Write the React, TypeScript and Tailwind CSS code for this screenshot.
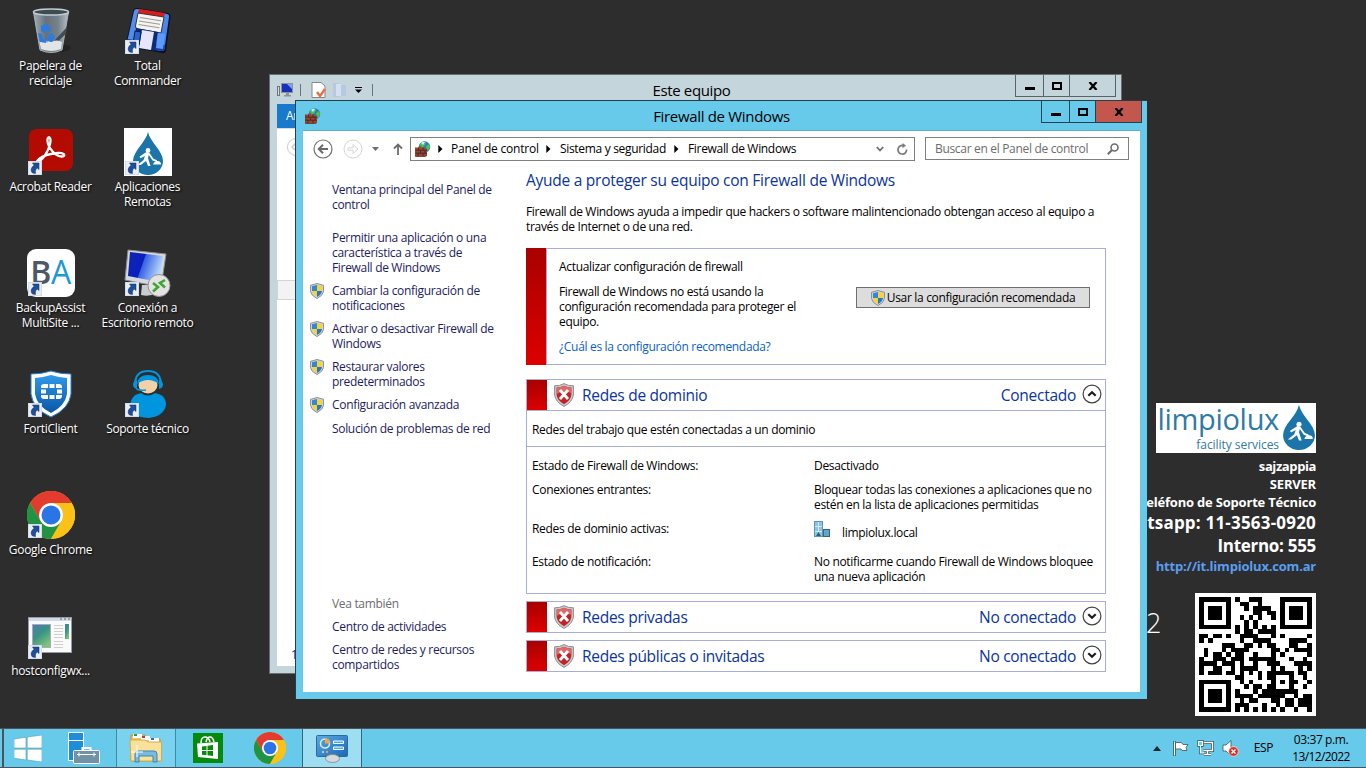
import React from "react";

/* ---------- QR code (version 2, level L, mask 6) ---------- */

const QR_SIZE = 25;

function gfMul(a: number, b: number) {
  let r = 0;
  for (let i = 7; i >= 0; i--) {
    r = (r << 1) ^ ((r >>> 7) * 0x11d);
    r ^= ((b >>> i) & 1) * a;
  }
  return r;
}

function errorWords(data: number[], degree: number) {
  const gen = new Array(degree).fill(0);
  gen[degree - 1] = 1;
  let root = 1;
  for (let i = 0; i < degree; i++) {
    for (let j = 0; j < degree; j++) {
      gen[j] = gfMul(gen[j], root);
      if (j + 1 < degree) gen[j] ^= gen[j + 1];
    }
    root = gfMul(root, 2);
  }
  const rem = new Array(degree).fill(0);
  for (const d of data) {
    const f = d ^ rem.shift();
    rem.push(0);
    gen.forEach((g, i) => (rem[i] ^= gfMul(g, f)));
  }
  return rem;
}

function qrMatrix(text: string) {
  const bits: number[] = [];
  const push = (v: number, n: number) => {
    for (let i = n - 1; i >= 0; i--) bits.push((v >> i) & 1);
  };
  push(4, 4);
  push(text.length, 8);
  for (const c of text) push(c.charCodeAt(0), 8);
  push(0, Math.min(4, 272 - bits.length));
  while (bits.length % 8) bits.push(0);
  for (let p = 0xec; bits.length < 272; p ^= 0xec ^ 0x11) push(p, 8);
  const words: number[] = [];
  for (let i = 0; i < 34; i++) words.push(parseInt(bits.slice(i * 8, i * 8 + 8).join(""), 2));
  const all = words.concat(errorWords(words, 10));

  const m = Array.from({ length: QR_SIZE }, () => new Array<number>(QR_SIZE).fill(0));
  const used = Array.from({ length: QR_SIZE }, () => new Array<boolean>(QR_SIZE).fill(false));
  const set = (r: number, c: number, v: boolean | number) => {
    if (r < 0 || c < 0 || r >= QR_SIZE || c >= QR_SIZE) return;
    m[r][c] = v ? 1 : 0;
    used[r][c] = true;
  };
  for (let i = 0; i < QR_SIZE; i++) {
    set(6, i, i % 2 === 0);
    set(i, 6, i % 2 === 0);
  }
  for (const [r, c] of [[3, 3], [3, 21], [21, 3]])
    for (let y = -4; y <= 4; y++)
      for (let x = -4; x <= 4; x++) {
        const d = Math.max(Math.abs(x), Math.abs(y));
        set(r + y, c + x, d !== 2 && d !== 4);
      }
  for (let y = -2; y <= 2; y++)
    for (let x = -2; x <= 2; x++) set(18 + y, 18 + x, Math.max(Math.abs(x), Math.abs(y)) !== 1);

  const fmt = "110110001000001".split("").map(Number);
  for (let i = 0; i < 15; i++) {
    if (i < 6) set(8, i, fmt[i]);
    else if (i === 6) set(8, 7, fmt[i]);
    else if (i === 7) set(8, 8, fmt[i]);
    else if (i === 8) set(7, 8, fmt[i]);
    else set(14 - i, 8, fmt[i]);
    if (i < 7) set(QR_SIZE - 1 - i, 8, fmt[i]);
    else set(8, QR_SIZE - 15 + i, fmt[i]);
  }
  set(17, 8, 1);

  let k = 0;
  for (let right = QR_SIZE - 1; right >= 1; right -= 2) {
    if (right === 6) right = 5;
    for (let v = 0; v < QR_SIZE; v++)
      for (let j = 0; j < 2; j++) {
        const x = right - j;
        const up = ((right + 1) & 2) === 0;
        const y = up ? QR_SIZE - 1 - v : v;
        if (used[y][x]) continue;
        let b = k < all.length * 8 ? (all[k >> 3] >> (7 - (k & 7))) & 1 : 0;
        k++;
        if ((((x * y) % 2) + ((x * y) % 3)) % 2 === 0) b ^= 1;
        m[y][x] = b;
      }
  }
  return m;
}

const QR_PATH = qrMatrix("http://it.limpiolux.com.ar/")
  .map((row, y) => row.map((v, x) => (v ? `M${x} ${y}h1v1h-1z` : "")).join(""))
  .join("");

/* ---------- icons ---------- */

function Shortcut() {
  return (
    <svg className="absolute bottom-px left-px h-[14px] w-[14px]" viewBox="0 0 14 14">
      <rect width="14" height="14" fill="#e9eef6" />
      <rect x=".5" y=".5" width="13" height="13" fill="none" stroke="#d5dde8" />
      <path d="M4.500 2H11v6.500L9.200 7C7.600 8.200 7.200 9.800 7.500 12.500L4.500 12C2.200 9.500 3 6.500 6.200 4.300Z" fill="#1d4f9c" stroke="#0d2f6a" strokeWidth=".5" />
    </svg>
  );
}

function RecycleBin() {
  return (
    <svg width="48" height="48" viewBox="0 0 48 48">
      <defs>
        <linearGradient id="bin" x1="0" x2="1">
          <stop offset="0" stopColor="#a3adb4" />
          <stop offset=".35" stopColor="#66727a" />
          <stop offset=".7" stopColor="#76828a" />
          <stop offset="1" stopColor="#b9c2c8" />
        </linearGradient>
      </defs>
      <ellipse cx="32" cy="41" rx="12" ry="4" fill="#232323" />
      <path d="M6.500 5H41.500L35 43Q24 48 13 43Z" fill="url(#bin)" stroke="#aab3b9" />
      <path d="M28 33 40 20l-1 7-10 9z" fill="#414d55" />
      <path d="M12.500 35Q18 32 24 35q6-3 11 0l-1 7q-10 4-20 0z" fill="#e2e5e6" />
      <ellipse cx="24" cy="5" rx="17.500" ry="3" fill="#3f4b53" stroke="#c3ccd2" strokeWidth="1.500" />
      <path d="m14 19 5-2 5 3-1 5-3-2-3 3-3-2zM11 26l4 1 1 5 4 1-1 3-6-1zM21 28l4-2 3 4-3 5-4-1-1 2z" fill="#2e7be0" />
    </svg>
  );
}

function Floppy() {
  return (
    <svg width="48" height="48" viewBox="0 0 48 48">
      <defs>
        <linearGradient id="fl" x1="0" x2="1" y2="1">
          <stop offset="0" stopColor="#5a93ee" />
          <stop offset="1" stopColor="#3f80ee" />
        </linearGradient>
      </defs>
      <path d="M13 1 44 6q3 1 2.500 4L42 44q-1 3-4 2L4 40q-3-1-2-4L9 4q1-3 4-3Z" fill="#0c1224" />
      <path d="M13 2 43 7q2.500.5 2 3L40.500 42q-.5 2.500-3 2L5 38.500q-2.500-.5-2-3L10 4q.5-2 3-2z" fill="url(#fl)" />
      <path d="m4 32 37 6-.5 4q-.5 2.500-3 2L5 38.500q-2.500-.5-2-3z" fill="#173fa6" />
      <path d="m15 2 26 4-1 4-26-4z" fill="#e01919" />
      <path d="m14 6 26 4-3 16-23-4q-3-.5-2.500-3z" fill="#f4f3ef" stroke="#333" />
      <path d="m16 10.500 21 3.300M15 14l21 3.300M14.500 17.500l21 3.300" stroke="#999" strokeWidth="1" />
      <path d="m12 21 22 4-3 19-22-4z" fill="#0d2a75" />
      <path d="m18 23 12 2-3 18-12-2z" fill="#e6e6fa" />
      <path d="m11 24 6 1-2 13-6-1z" fill="#2d66ca" stroke="#091b50" />
      <path d="m34 26 7 1-2 15-7-1z" fill="#5c9bfb" />
    </svg>
  );
}

function Acrobat() {
  return (
    <svg width="48" height="48" viewBox="0 0 48 48">
      <rect x="2" y="1" width="44" height="42" rx="7.500" fill="#b30b00" />
      <path
        d="M12 33C17 31 23 20 23.500 13 23.800 8 20 8 20.500 13 21 20 29 29 35 28.500 39.500 28 37 24.500 31 25 24 25.500 16 28 12 31 8 34.500 10 35.500 12 33Z"
        fill="none"
        stroke="#fff"
        strokeWidth="2.300"
      />
    </svg>
  );
}

function Drop() {
  return (
    <>
      <path d="M24 4C22 14 9 23 9 33a15 14 0 0 0 30 0C39 23 26 14 24 4Z" fill="#1b75a8" />
      <circle cx="24" cy="22.500" r="2.400" fill="#fff" />
      <path d="M22.500 24 15.500 28.500l1 1.800 4.500-2.300-1.500 4-6 5h3.200l5.300-4 2 5H26.500l-2.500-8 .8-3 3.700 5.500 4.500 1.500v-1.800l-3.500-1.400-4-5.800z" fill="#fff" />
      <path d="M29 36.500q1-3.500 4.500-3.500t3.500 3.500z" fill="#fff" />
    </>
  );
}

function DropTile() {
  return (
    <svg width="48" height="48" viewBox="0 0 48 48">
      <rect width="48" height="48" fill="#fff" />
      <Drop />
    </svg>
  );
}

function BackupAssist() {
  return (
    <div className="flex h-12 w-12 items-center justify-center rounded-[9px] bg-white pb-[3px] font-['Open_Sans',sans-serif] text-[32px] leading-none tracking-[-0.5px]">
      <span className="font-semibold text-[#4d5a66]">B</span>
      <span className="text-[#1b9ad6]">A</span>
    </div>
  );
}

function RemoteDesktop() {
  return (
    <svg width="48" height="48" viewBox="0 0 48 48">
      <defs>
        <linearGradient id="rd" x1="0" x2="1" y2=".3">
          <stop offset="0" stopColor="#1026ac" />
          <stop offset=".48" stopColor="#0a1fc0" />
          <stop offset=".5" stopColor="#3561e4" />
          <stop offset="1" stopColor="#b3d4fa" />
        </linearGradient>
      </defs>
      <path d="M18 36h12l2 8q-6 4-15 2z" fill="#c9cccf" />
      <path d="M4 1 42 5 37 38 1 31Z" fill="#d6d9dc" stroke="#8b8f94" />
      <path d="M6 3 39 7 35 33 4 27Z" fill="url(#rd)" />
      <circle cx="35" cy="36.500" r="11" fill="#e3e3e3" stroke="#909090" />
      <path d="m29 34 5 4-5 4.500M41 31l-5 3 5 4.500" fill="none" stroke="#3fa535" strokeWidth="2.600" />
    </svg>
  );
}

function Forti() {
  return (
    <svg width="48" height="48" viewBox="0 0 48 48">
      <defs>
        <linearGradient id="fo" x1="0" x2="0" y2="1">
          <stop offset="0" stopColor="#2f9ae8" />
          <stop offset="1" stopColor="#0b55a6" />
        </linearGradient>
      </defs>
      <path d="M24 1Q33 4 44 4V24Q42 39 24 47 6 39 4 24V4Q15 4 24 1Z" fill="#fff" stroke="#2082d4" />
      <path d="M24 5Q32 7.500 40 8V24Q38 36 24 43 10 36 8 24V8Q16 7.500 24 5Z" fill="url(#fo)" />
      <path
        d="M17 14h4v4h-7v-1q0-3 3-3zM22.500 14h5v4h-5zM29 14h3q3 0 3 3v1h-6zM14 19.500h5v4h-5zM30 19.500h5v4h-5zM14 25h7v4h-4q-3 0-3-3zM22.500 25h5v4h-5zM29 25h6v1q0 3-3 3h-3z"
        fill="#fff"
      />
    </svg>
  );
}

function Support() {
  return (
    <svg width="48" height="48" viewBox="0 0 48 48">
      <path d="M6 36Q7 24 18 23H30Q42 24 42 35 40 46 25 48 10 47 6 40Z" fill="#0095df" />
      <path d="M17 23q7 5 14 0l-2-3H19z" fill="#2e2e2e" />
      <ellipse cx="24" cy="15" rx="9.500" ry="8.500" fill="#f3d1a8" />
      <path d="M13 14Q14 5 24 5t11 9Q24 6 13 14Z" fill="#0095df" />
      <path d="M11 13Q12 1 24 1t13 12" fill="none" stroke="#0095df" strokeWidth="2" />
      <path d="M13 10v9q-4-1-4-4.500T13 10zM35 10v9q4-1 4-4.500T35 10z" fill="#0095df" />
      <path d="M12 18q2 3 10 2" fill="none" stroke="#0095df" strokeWidth="1.500" />
    </svg>
  );
}

function Chrome({ size }: { size: number }) {
  return (
    <svg width={size} height={size} viewBox="0 0 48 48">
      <circle cx="24" cy="24" r="24" fill="#fbc116" />
      <path d="M3.200 12A24 24 0 0 1 44.800 12H24L13.600 30Z" fill="#e33b2e" />
      <path d="M3.200 12A24 24 0 0 0 24 48L34.400 30H13.600Z" fill="#229342" />
      <path d="M44.800 12A24 24 0 0 1 24 48L34.400 30 24 12Z" fill="#fbc116" />
      <circle cx="24" cy="24" r="12" fill="#fff" />
      <circle cx="24" cy="24" r="9.500" fill="#2a74e8" />
    </svg>
  );
}

function HostConfig() {
  return (
    <svg width="48" height="48" viewBox="0 0 48 48">
      <defs>
        <linearGradient id="hc" x1="0" x2=".6" y2="1">
          <stop offset="0" stopColor="#4b7fb3" />
          <stop offset=".5" stopColor="#3b9383" />
          <stop offset="1" stopColor="#7cc47d" />
        </linearGradient>
      </defs>
      <rect x="1.500" y="5.500" width="43" height="35" fill="#fafafa" stroke="#949ba6" />
      <rect x="2" y="6" width="42" height="3" fill="#d3dae5" />
      <path d="M33 7h2m2 0h2m2 0h2" stroke="#586070" />
      <rect x="5.500" y="12.500" width="18" height="23" fill="url(#hc)" stroke="#aab" />
      <path d="M27 13.500h9M27 16.500h9M27 19.500h9M27 22.500h9M27 25.500h9M27 29.500h9M27 32.500h9M27 35.500h9" stroke="#cfcfcf" />
      <rect x="38" y="12" width="4" height="15" fill="url(#hc)" />
    </svg>
  );
}

function UacShield({ className }: { className?: string }) {
  return (
    <svg className={className} width="14" height="16" viewBox="0 0 14 16">
      <path d="M7 .5 13.500 2.300V8.500Q13 12.500 7 15.600 1 12.500.5 8.500V2.300Z" fill="#cfd3d6" stroke="#83898d" strokeWidth=".9" />
      <path d="M7 2V8H2V3.300Z" fill="#2f86db" />
      <path d="M7 2 12 3.300V8H7Z" fill="#f8d332" />
      <path d="M2 8H7V14Q2.500 11.500 2 8Z" fill="#f8d332" />
      <path d="M12 8H7V14Q11.500 11.500 12 8Z" fill="#2277cf" />
    </svg>
  );
}

function RedShield() {
  return (
    <svg width="20" height="24" viewBox="0 0 20 24">
      <path d="M10 .6Q14 3 19.400 2.800V12Q18.500 19 10 23.400 1.500 19 .6 12V2.800Q6 3 10 .6Z" fill="#c8cbcc" stroke="#8b8f90" />
      <path d="M10 2.800Q13.500 4.700 17.400 4.600V12Q16.500 17.700 10 21.200 3.500 17.700 2.600 12V4.600Q6.500 4.700 10 2.800Z" fill="#c32228" />
      <path d="M10 2.800Q13.500 4.700 17.400 4.600V10Q9 7 2.600 11V4.600Q6.500 4.700 10 2.800Z" fill="#dc6a6c" />
      <path d="m6 7 8 9M14 7l-8 9" stroke="#fff" strokeWidth="2.800" />
    </svg>
  );
}

function FirewallIcon() {
  return (
    <svg width="16" height="16" viewBox="0 0 16 16">
      <circle cx="9.500" cy="6" r="5.700" fill="#2678d8" />
      <path d="M5 3q2-3 5-2.500l1 2-2 3-3 2zM11 5l3-2 1.200 3-2 4-2-2z" fill="#4ec04b" />
      <path d="M6 2q2-2 4-1L8 4z" fill="#cdeefa" />
      <path d="M.5 6.500h3v-1h3v1h3v1h2.500v7L10 15.500H.5Z" fill="#9a4634" />
      <path d="M.5 9.200H12M.5 12.200H12M3.500 6.500v2.700M8 6.500v2.700M5.500 9.200v3M10 9.200v3M3 12.200v3M8 12.200v3" stroke="#4e241c" strokeWidth=".9" />
      <path d="M.5 6.500v9H10l2-1" fill="none" stroke="#5a2a20" strokeWidth=".7" />
    </svg>
  );
}

function ComputerIcon() {
  return (
    <svg width="16" height="14" viewBox="0 0 16 14">
      <rect x=".5" y="3.500" width="2" height="9" fill="#d4dcd8" stroke="#6e7878" />
      <rect x="4.500" y=".5" width="11" height="9" fill="#1730bb" stroke="#8b9298" />
      <path d="M10 1h5v5z" fill="#7fa3ee" />
      <path d="M9 10h3v2H9zM7 12h7v1.500H7z" fill="#8d9499" />
    </svg>
  );
}

function Caret({ up }: { up?: boolean }) {
  return (
    <svg width="20" height="20" viewBox="0 0 20 20">
      <circle cx="10" cy="10" r="8.900" fill="#fff" stroke="#444" strokeWidth="1.200" />
      <path d={up ? "m6.300 11.800 3.700-3.600 3.700 3.600" : "m6.300 8.200 3.700 3.600 3.700-3.600"} fill="none" stroke="#1d1d1d" strokeWidth="2.200" />
    </svg>
  );
}

function Crumb() {
  return (
    <svg width="5" height="8" viewBox="0 0 5 8">
      <path d="M.3 0 4.500 4 .3 8z" fill="#000" />
    </svg>
  );
}

/* ---------- desktop ---------- */

type Item = { label: string[]; icon: React.ReactNode; plain?: boolean };

const COL_ONE: Item[] = [
  { label: ["Papelera de", "reciclaje"], icon: <RecycleBin />, plain: true },
  { label: ["Acrobat Reader"], icon: <Acrobat /> },
  { label: ["BackupAssist", "MultiSite ..."], icon: <BackupAssist /> },
  { label: ["FortiClient"], icon: <Forti /> },
  { label: ["Google Chrome"], icon: <Chrome size={48} /> },
  { label: ["hostconfigwx..."], icon: <HostConfig /> },
];

const COL_TWO: Item[] = [
  { label: ["Total", "Commander"], icon: <Floppy /> },
  { label: ["Aplicaciones", "Remotas"], icon: <DropTile /> },
  { label: ["Conexión a", "Escritorio remoto"], icon: <RemoteDesktop /> },
  { label: ["Soporte técnico"], icon: <Support /> },
];

function IconColumn({ items }: { items: Item[] }) {
  return (
    <div className="flex w-[97px] flex-col">
      {items.map((it) => (
        <div key={it.label[0]} className="flex h-[121px] shrink-0 flex-col items-center">
          <div className="relative h-12 w-12">
            {it.icon}
            {!it.plain && <Shortcut />}
          </div>
          <div className="mt-[3px] text-center leading-[15px] whitespace-nowrap text-white [text-shadow:1px_1px_2px_#000]">
            {it.label.map((l) => (
              <div key={l}>{l}</div>
            ))}
          </div>
        </div>
      ))}
    </div>
  );
}

function Wallpaper() {
  return (
    <div className="absolute top-[403px] right-[50px] flex flex-col items-end font-['Open_Sans',sans-serif] font-bold whitespace-nowrap text-white">
      <div className="flex h-[50px] w-[160px] bg-white font-normal text-[#2f7ba5]">
        <div className="flex w-[123px] flex-col items-end">
          <div className="text-[29px] leading-[31px] tracking-[-0.3px]">limpiolux</div>
          <div className="mt-[3px] text-[12px] leading-[16px] tracking-[-0.05px]">facility services</div>
        </div>
        <svg className="mt-[1px] ml-[3px]" width="34" height="47" viewBox="8 3 32 45" preserveAspectRatio="none">
          <Drop />
        </svg>
      </div>
      <div className="mt-[4px] text-[13px] leading-[18px] tracking-[-0.4px]">sajzappia</div>
      <div className="text-[13px] leading-[18px] tracking-[-0.2px]">SERVER</div>
      <div className="text-[13px] leading-[18px] tracking-[-0.2px]">Teléfono de Soporte Técnico</div>
      <div className="text-[17px] leading-[24px] tracking-[0.2px]">Whatsapp: 11-3563-0920</div>
      <div className="text-[17px] leading-[22px] tracking-[-0.3px]">Interno: 555</div>
      <div className="text-[13px] leading-[18px] tracking-[-0.2px] text-[#5a9ef0]">http://it.limpiolux.com.ar</div>
      <div className="mt-[18px] flex">
        <div className="mt-[13px] mr-[34px] text-[27px] leading-[34px] font-light">2012</div>
        <div className="h-[123px] w-[121px] bg-white px-[4px] py-[4px]">
          <svg width="113" height="115" viewBox="0 0 25 25" preserveAspectRatio="none" shapeRendering="crispEdges">
            <path d={QR_PATH} />
          </svg>
        </div>
      </div>
    </div>
  );
}

/* ---------- windows ---------- */

function CaptionButtons({ border, close }: { border: string; close: string }) {
  return (
    <div className={`flex h-[22px] w-[101px] shrink-0 border border-t-0 ${border}`}>
      <div className="flex w-[27px] items-center justify-center">
        <div className="mt-[5px] h-[3px] w-[10px] bg-black" />
      </div>
      <div className={`flex w-[27px] items-center justify-center border-x ${border}`}>
        <div className="h-[8px] w-[10px] border-2 border-black" />
      </div>
      <div className={`flex w-[45px] items-center justify-center ${close}`}>
        <svg width="10" height="8" viewBox="0 0 10 8">
          <path d="M1.500 0 8.500 8M8.500 0 1.500 8" stroke="#000" strokeWidth="2.300" />
        </svg>
      </div>
    </div>
  );
}

function BackWindow() {
  return (
    <div className="absolute top-[74px] left-[269px] flex h-[600px] w-[853px] flex-col border border-[#676d73] bg-[#c4d6dc] text-black">
      <div className="flex h-[29px] shrink-0 justify-between">
        <div className="flex w-[110px] items-center pl-[7px]">
          <ComputerIcon />
          <div className="mx-[7px] h-[12px] w-px bg-[#6b7478]" />
          <svg className="ml-[3px]" width="16" height="16" viewBox="0 0 16 16">
            <path d="M1 .5h9L14 4v11.500H1z" fill="#fff" stroke="#85888a" />
            <path d="m6 10 3 4 5-7" fill="none" stroke="#ea7144" strokeWidth="2.500" />
          </svg>
          <svg className="ml-[6px]" width="13" height="15" viewBox="0 0 13 15">
            <path d="M0 1h7v14H0zM7 3h6v11H7z" fill="#b5c9e2" />
            <path d="M3 2h5v12H3z" fill="#d3e1ef" />
          </svg>
          <svg className="ml-[9px]" width="7" height="6" viewBox="0 0 7 6">
            <path d="M0 .5h7" stroke="#000" />
            <path d="M0 2.500h7L3.500 6z" />
          </svg>
          <div className="ml-[10px] h-[12px] w-px shrink-0 bg-[#6b7478]" />
        </div>
        <div className="pt-[5px] text-[15px] leading-[20px] tracking-[-0.35px]">Este equipo</div>
        <div className="flex w-[118px] justify-end pr-[5px]">
          <CaptionButtons border="border-[#5b6367]" close="" />
        </div>
      </div>
      <div className="mx-[7px] mb-[7px] flex grow flex-col bg-white">
        <div className="flex h-[24px] items-center bg-[#1979ca] pl-[9px] text-white">Archivo</div>
        <div className="h-px bg-[#d5dbe0]" />
        <svg className="mt-[9px] ml-[10px]" width="18" height="18" viewBox="0 0 18 18">
          <circle cx="9" cy="9" r="8.500" fill="none" stroke="#ccc" />
          <path d="m9 5-4 4 4 4" fill="none" stroke="#ccc" strokeWidth="1.500" />
        </svg>
        <div className="mt-[124px] h-[20px] w-[60px] border border-[#d4d4d4] bg-[#f3f3f3]" />
        <div className="mt-[347px] pl-[14px] leading-[15px] text-[#1b2a9b]">1</div>
      </div>
    </div>
  );
}

function NavRow() {
  return (
    <div className="flex h-[36px] items-start pt-[6px] text-[12px]">
      <svg className="mt-[2px] ml-[10px]" width="20" height="20" viewBox="0 0 20 20">
        <circle cx="10" cy="10" r="9" fill="none" stroke="#707070" strokeWidth="1.200" />
        <path d="M15 10H6M10 5.800 5.800 10l4.200 4.200" fill="none" stroke="#6a6a6a" strokeWidth="2" />
      </svg>
      <svg className="mt-[2px] ml-[10px]" width="20" height="20" viewBox="0 0 20 20">
        <circle cx="10" cy="10" r="9" fill="none" stroke="#d6d6d6" />
        <path d="M5 8.800h5V5.500l5 4.500-5 4.500v-3.300H5z" fill="none" stroke="#d6d6d6" />
      </svg>
      <svg className="mt-[10px] ml-[9px]" width="7" height="4" viewBox="0 0 7 4">
        <path d="M0 0h7L3.500 4z" fill="#6d6d6d" />
      </svg>
      <svg className="mt-[6px] ml-[14px]" width="10" height="12" viewBox="0 0 10 12">
        <path d="M5 12V1.500M1 5.500 5 1.500l4 4" fill="none" stroke="#6d6d6d" strokeWidth="1.800" />
      </svg>
      <div className="ml-[7px] flex h-[24px] w-[505px] items-center border border-[#7f7f7f] pl-[4px]">
        <FirewallIcon />
        <div className="ml-[7px] flex items-center">
          <Crumb />
          <span className="w-[94px] pl-[8px] whitespace-nowrap tracking-[-0.2px]">Panel de control</span>
          <div className="ml-[9px]" />
          <Crumb />
          <span className="w-[115px] pl-[9px] whitespace-nowrap">Sistema y seguridad</span>
          <div className="ml-[8px]" />
          <Crumb />
          <span className="pl-[9px] whitespace-nowrap">Firewall de Windows</span>
        </div>
        <svg className="ml-auto" width="8" height="6" viewBox="0 0 8 6">
          <path d="m.8 1 3.200 3.500L7.200 1" fill="none" stroke="#6d6d6d" strokeWidth="1.800" />
        </svg>
        <svg className="mr-[6px] ml-[13px]" width="11" height="12" viewBox="0 0 11 12">
          <path d="M9.600 6.500A4.300 4.300 0 1 1 6.500 2.600" fill="none" stroke="#7a7a7a" strokeWidth="1.700" />
          <path d="M5.500 0v5.200L9 2.500z" fill="#7a7a7a" />
        </svg>
      </div>
      <div className="ml-[10px] flex h-[23px] w-[204px] items-center border border-[#7f7f7f] pr-[9px] pl-[9px] text-[#6d6d6d]">
        Buscar en el Panel de control
        <svg className="ml-auto" width="12" height="12" viewBox="0 0 12 12">
          <circle cx="7.500" cy="4.500" r="3.500" fill="none" stroke="#6d6d6d" strokeWidth="1.600" />
          <path d="M5 7 .8 11.200" stroke="#6d6d6d" strokeWidth="2" />
        </svg>
      </div>
    </div>
  );
}

function SideLink({ lines, shield, gap }: { lines: string[]; shield?: boolean; gap: string }) {
  return (
    <div className={`flex ${gap}`}>
      <div className="w-[22px] shrink-0">{shield && <UacShield />}</div>
      <div>
        {lines.map((l) => (
          <div key={l}>{l}</div>
        ))}
      </div>
    </div>
  );
}

function Sidebar() {
  return (
    <div className="flex w-[223px] shrink-0 flex-col pl-[7px] leading-[15px] whitespace-nowrap text-[#1c1c62]">
      <SideLink gap="mt-[15px]" lines={["Ventana principal del Panel de", "control"]} />
      <SideLink gap="mt-[18px]" lines={["Permitir una aplicación o una", "característica a través de", "Firewall de Windows"]} />
      <SideLink gap="mt-[8px]" shield lines={["Cambiar la configuración de", "notificaciones"]} />
      <SideLink gap="mt-[8px]" shield lines={["Activar o desactivar Firewall de", "Windows"]} />
      <SideLink gap="mt-[8px]" shield lines={["Restaurar valores", "predeterminados"]} />
      <SideLink gap="mt-[8px]" shield lines={["Configuración avanzada"]} />
      <SideLink gap="mt-[8px]" lines={["Solución de problemas de red"]} />
      <div className="mt-[160px] pl-[22px] text-[#6d6d6d]">Vea también</div>
      <SideLink gap="mt-[8px]" lines={["Centro de actividades"]} />
      <SideLink gap="mt-[8px]" lines={["Centro de redes y recursos", "compartidos"]} />
    </div>
  );
}

function NetHeader({ title, state, open }: { title: string; state: string; open?: boolean }) {
  return (
    <div className="flex h-[30px] items-center text-[15.500px] tracking-[-0.28px] text-[#0a34a0]">
      <div className="h-[30px] w-[20px] bg-gradient-to-b from-[#a90000] to-[#dd0000]" />
      <div className="ml-[7px]">
        <RedShield />
      </div>
      <div className="ml-[8px]">{title}</div>
      <div className="ml-auto">{state}</div>
      <div className="mr-[3px] mb-[3px] ml-[6px]">
        <Caret up={open} />
      </div>
    </div>
  );
}

function Content() {
  return (
    <div className="w-[580px] leading-[15px] whitespace-nowrap">
      <div className="mt-[2px] text-[15.500px] leading-[22px] tracking-[-0.26px] text-[#0a34a0]">Ayude a proteger su equipo con Firewall de Windows</div>
      <div className="mt-[13px]">Firewall de Windows ayuda a impedir que hackers o software malintencionado obtengan acceso al equipo a</div>
      <div>través de Internet o de una red.</div>

      <div className="mt-[14px] flex h-[117px]">
        <div className="w-[20px] bg-gradient-to-b from-[#a90000] to-[#dd0000]" />
        <div className="flex grow justify-between border border-[#a8acd8] pt-[10px] pr-[15px] pl-[12px]">
          <div>
            <div>Actualizar configuración de firewall</div>
            <div className="mt-[10px]">Firewall de Windows no está usando la</div>
            <div>configuración recomendada para proteger el</div>
            <div>equipo.</div>
            <div className="mt-[10px] text-[#0a5fc9]">¿Cuál es la configuración recomendada?</div>
          </div>
          <div className="mt-[28px] flex h-[21px] w-[234px] items-center justify-center border border-[#707070] bg-[#dddddd]">
            <UacShield className="mr-[2px]" />
            Usar la configuración recomendada
          </div>
        </div>
      </div>

      <div className="mt-[14px] h-[215px] border border-[#a8acd8]">
        <NetHeader title="Redes de dominio" state="Conectado" open />
        <div className="flex h-[37px] items-center border-y border-[#a8acd8] pt-[2px] pl-[5px]">Redes del trabajo que estén conectadas a un dominio</div>
        <div className="grid grid-cols-[282px_1fr] pt-[11px] pl-[5px]">
          <div className="h-[24px]">Estado de Firewall de Windows:</div>
          <div>Desactivado</div>
          <div className="h-[39px]">Conexiones entrantes:</div>
          <div>
            Bloquear todas las conexiones a aplicaciones que no
            <br />
            estén en la lista de aplicaciones permitidas
          </div>
          <div className="h-[33px]">Redes de dominio activas:</div>
          <div className="flex">
            <svg width="16" height="16" viewBox="0 0 16 16">
              <rect x=".5" y=".5" width="8" height="15" fill="#8cc5e6" stroke="#5e95b8" />
              <path d="M4.500 1v10M1 5.500h7M1 10.500h7" stroke="#d0ebf8" />
              <path d="m2 15 2.500-4L7 15z" fill="#2b607f" />
              <rect x="9.500" y="8.500" width="6" height="7" fill="#5fa7c9" stroke="#3a6479" />
            </svg>
            <span className="pt-[4px] pl-[12px]">limpiolux.local</span>
          </div>
          <div>Estado de notificación:</div>
          <div>
            No notificarme cuando Firewall de Windows bloquee
            <br />
            una nueva aplicación
          </div>
        </div>
      </div>
      <div className="mt-[7px] border border-[#a8acd8]">
        <NetHeader title="Redes privadas" state="No conectado" />
      </div>
      <div className="mt-[7px] border border-[#a8acd8]">
        <NetHeader title="Redes públicas o invitadas" state="No conectado" />
      </div>
    </div>
  );
}

function FirewallWindow() {
  return (
    <div className="absolute top-[100px] left-[295px] flex h-[599px] w-[852px] flex-col border-t border-l border-[#243d47] bg-[#67caea] text-black">
      <div className="flex h-[29px] shrink-0 justify-between">
        <div className="flex w-[110px] items-center pl-[9px]">
          <FirewallIcon />
        </div>
        <div className="pt-[5px] text-[15px] leading-[20px] tracking-[-0.32px]">Firewall de Windows</div>
        <div className="flex w-[110px] justify-end pr-[5px]">
          <CaptionButtons border="border-[#1c4656]" close="bg-[#c3574d]" />
        </div>
      </div>
      <div className="mx-[7px] mb-[7px] flex grow flex-col border-t border-[#5eaecb] bg-white">
        <NavRow />
        <div className="flex grow">
          <Sidebar />
          <Content />
        </div>
      </div>
    </div>
  );
}

/* ---------- taskbar ---------- */

function Taskbar() {
  return (
    <div className="flex h-[40px] items-stretch border-t border-b border-[#4c5255] bg-[#67caea] text-black">
      <div className="w-[4px] border-r-2 border-[#4c5255]" />
      <div className="flex w-[112px] items-center">
        <svg className="ml-[10px]" width="28" height="27" viewBox="0 0 28 27">
          <path d="M0 4 12 2.200V13H0zM13.200 2 28 0V13H13.200zM0 14.200H12V25L0 23.200zM13.200 14.200H28V27L13.200 25z" fill="#fff" stroke="#4fa0bb" strokeWidth=".6" />
        </svg>
        <svg className="ml-[26px]" width="32" height="32" viewBox="0 0 32 32">
          <path d="M.5.500h15v28H.5z" fill="#1e8edb" stroke="#fff" />
          <path d="M.5 8.500h15" stroke="#fff" />
          <path d="M14.500 18v-2h8v2" fill="none" stroke="#fff" strokeWidth="2" />
          <rect x="5.500" y="18.500" width="26" height="13" rx="1" fill="#7292a8" stroke="#fff" />
          <path d="M9 22.500h19M11 20.500v4M26 20.500v4" stroke="#fff" />
        </svg>
      </div>
      <div className="flex w-[60px] items-center justify-center border-x border-[#3e8ba5] bg-[#7bd2ee]">
        <svg width="34" height="30" viewBox="0 0 34 30">
          <path d="M2 2h14v4h15v22H2z" fill="#e9c768" stroke="#b8913f" />
          <rect x="4" y="1" width="9" height="4" fill="#fff" />
          <rect x="5" y="1" width="3" height="2" fill="#2aa52a" />
          <rect x="12" y="3" width="9" height="4" fill="#fff" />
          <rect x="13" y="3" width="3" height="2" fill="#cf3528" />
          <rect x="20" y="5" width="10" height="4" fill="#fff" />
          <rect x="22" y="5" width="3" height="2" fill="#2472d4" />
          <path d="M1 7h15l3 2h13.500v19H2z" fill="#f8e29b" stroke="#d3ab4c" />
          <path d="M6 29v-8q0-3 3-3h16q3 0 3 3v8h-4v-6H10v6z" fill="#77bce0" stroke="#4184ad" />
          <path d="M8 12v12M2 19h12" stroke="#fff" />
        </svg>
      </div>
      <div className="flex w-[126px] items-center">
        <svg className="ml-[17px]" width="30" height="30" viewBox="0 0 30 30">
          <rect width="30" height="30" fill="#068a0b" />
          <path d="M4 10.500 25 9v17L5 24z" fill="#fff" />
          <path d="M8 10q0-6 4-6t5 5M13 9q1-5 4-5t4 5" fill="none" stroke="#fff" strokeWidth="1.500" />
          <path d="m9 13.500 4.500-.5v4H9zM14.500 12.800 20 12v5h-5.500zM9 18h4.500v4.200L9 21.800zM14.500 18H20v5l-5.500-.7z" fill="#068a0b" />
        </svg>
        <div className="ml-[31px]">
          <Chrome size={32} />
        </div>
      </div>
      <div className="flex w-[60px] items-center justify-center border-x border-[#2d6a80] bg-[#9edef3]">
        <svg width="34" height="30" viewBox="0 0 34 30">
          <defs>
            <linearGradient id="cp" x1="0" x2="1" y2="1">
              <stop offset="0" stopColor="#5baae4" />
              <stop offset="1" stopColor="#1c66b4" />
            </linearGradient>
          </defs>
          <rect x="1.500" y="2.500" width="31" height="21" rx="1" fill="url(#cp)" stroke="#2e6a9e" />
          <circle cx="10" cy="10.500" r="4.500" fill="none" stroke="#d7edfa" strokeWidth="1.500" />
          <path d="M10 10.500V5a5.500 5.500 0 0 1 5 5.500z" fill="#f4a63a" />
          <path d="M18.500 8h10v2.500h-10zM18.500 14h10v2.500h-10z" fill="#38b4ee" stroke="#fff" />
          <circle cx="8" cy="19" r="1.200" fill="#7fe0f0" />
          <circle cx="12" cy="19" r="1.200" fill="#f39a3a" />
          <ellipse cx="17.500" cy="25.500" rx="7" ry="4" fill="#d5d9dc" stroke="#7d868c" strokeWidth=".8" />
        </svg>
      </div>
      <div className="ml-auto flex items-center">
        <svg width="8" height="5" viewBox="0 0 8 5">
          <path d="M0 5 4 0l4 5z" fill="#10242c" />
        </svg>
        <svg className="ml-[12px]" width="17" height="17" viewBox="0 0 17 17">
          <path d="M1.500 1v15" stroke="#3a545e" strokeWidth="2.500" />
          <path d="M1.500 1.500v14" stroke="#fff" />
          <path d="M2.500 2.500h6l1.500 2h5l-2 3 1 3H9l-1-1.500H2.500z" fill="#fff" stroke="#3a545e" strokeWidth=".8" />
        </svg>
        <svg className="ml-[7px]" width="17" height="16" viewBox="0 0 17 16">
          <path d="M6 2.500h9.500v8H6.500M10.500 11v3M7 14.500h7" fill="none" stroke="#3a545e" strokeWidth="2.800" />
          <path d="M6 2.500h9.500v8H6.500M10.500 11v3M7 14.500h7" fill="none" stroke="#fff" strokeWidth="1.300" />
          <path d="M1.500 1.500h4v4h-4zM3.500 6v7h4" fill="none" stroke="#3a545e" strokeWidth="2.600" />
          <path d="M1.500 1.500h4v4h-4zM3.500 6v7h4" fill="#67caea" stroke="#fff" strokeWidth="1.200" />
        </svg>
        <svg className="ml-[8px]" width="17" height="17" viewBox="0 0 17 17">
          <path d="M1 5h3l5-4.500v15L4 11H1z" fill="#fff" stroke="#3a545e" strokeWidth=".8" />
          <circle cx="11.500" cy="11.500" r="4.800" fill="#dc2a23" stroke="#fbdcd8" strokeWidth=".8" />
          <path d="m9.500 9.500 4 4m0-4-4 4" stroke="#fff" strokeWidth="1.500" />
        </svg>
        <div className="ml-[15px] text-[12px] tracking-[-0.4px]">ESP</div>
        <div className="mr-[15px] ml-[18px] w-[60px] text-center text-[12px] leading-[17px] tracking-[-0.6px] whitespace-nowrap">
          <div className="tracking-[-0.4px]">03:37 p.m.</div>
          <div>13/12/2022</div>
        </div>
      </div>
    </div>
  );
}

export default function App() {
  return (
    <div className="relative flex h-[768px] w-[1366px] flex-col overflow-hidden bg-[#2d2d2d] font-['Open_Sans','Noto_Sans',sans-serif] text-[12px] tracking-[-0.32px]">
      <div className="flex h-[728px] pt-[7px] pl-[2px]">
        <IconColumn items={COL_ONE} />
        <IconColumn items={COL_TWO} />
      </div>
      <Wallpaper />
      <BackWindow />
      <FirewallWindow />
      <Taskbar />
    </div>
  );
}
